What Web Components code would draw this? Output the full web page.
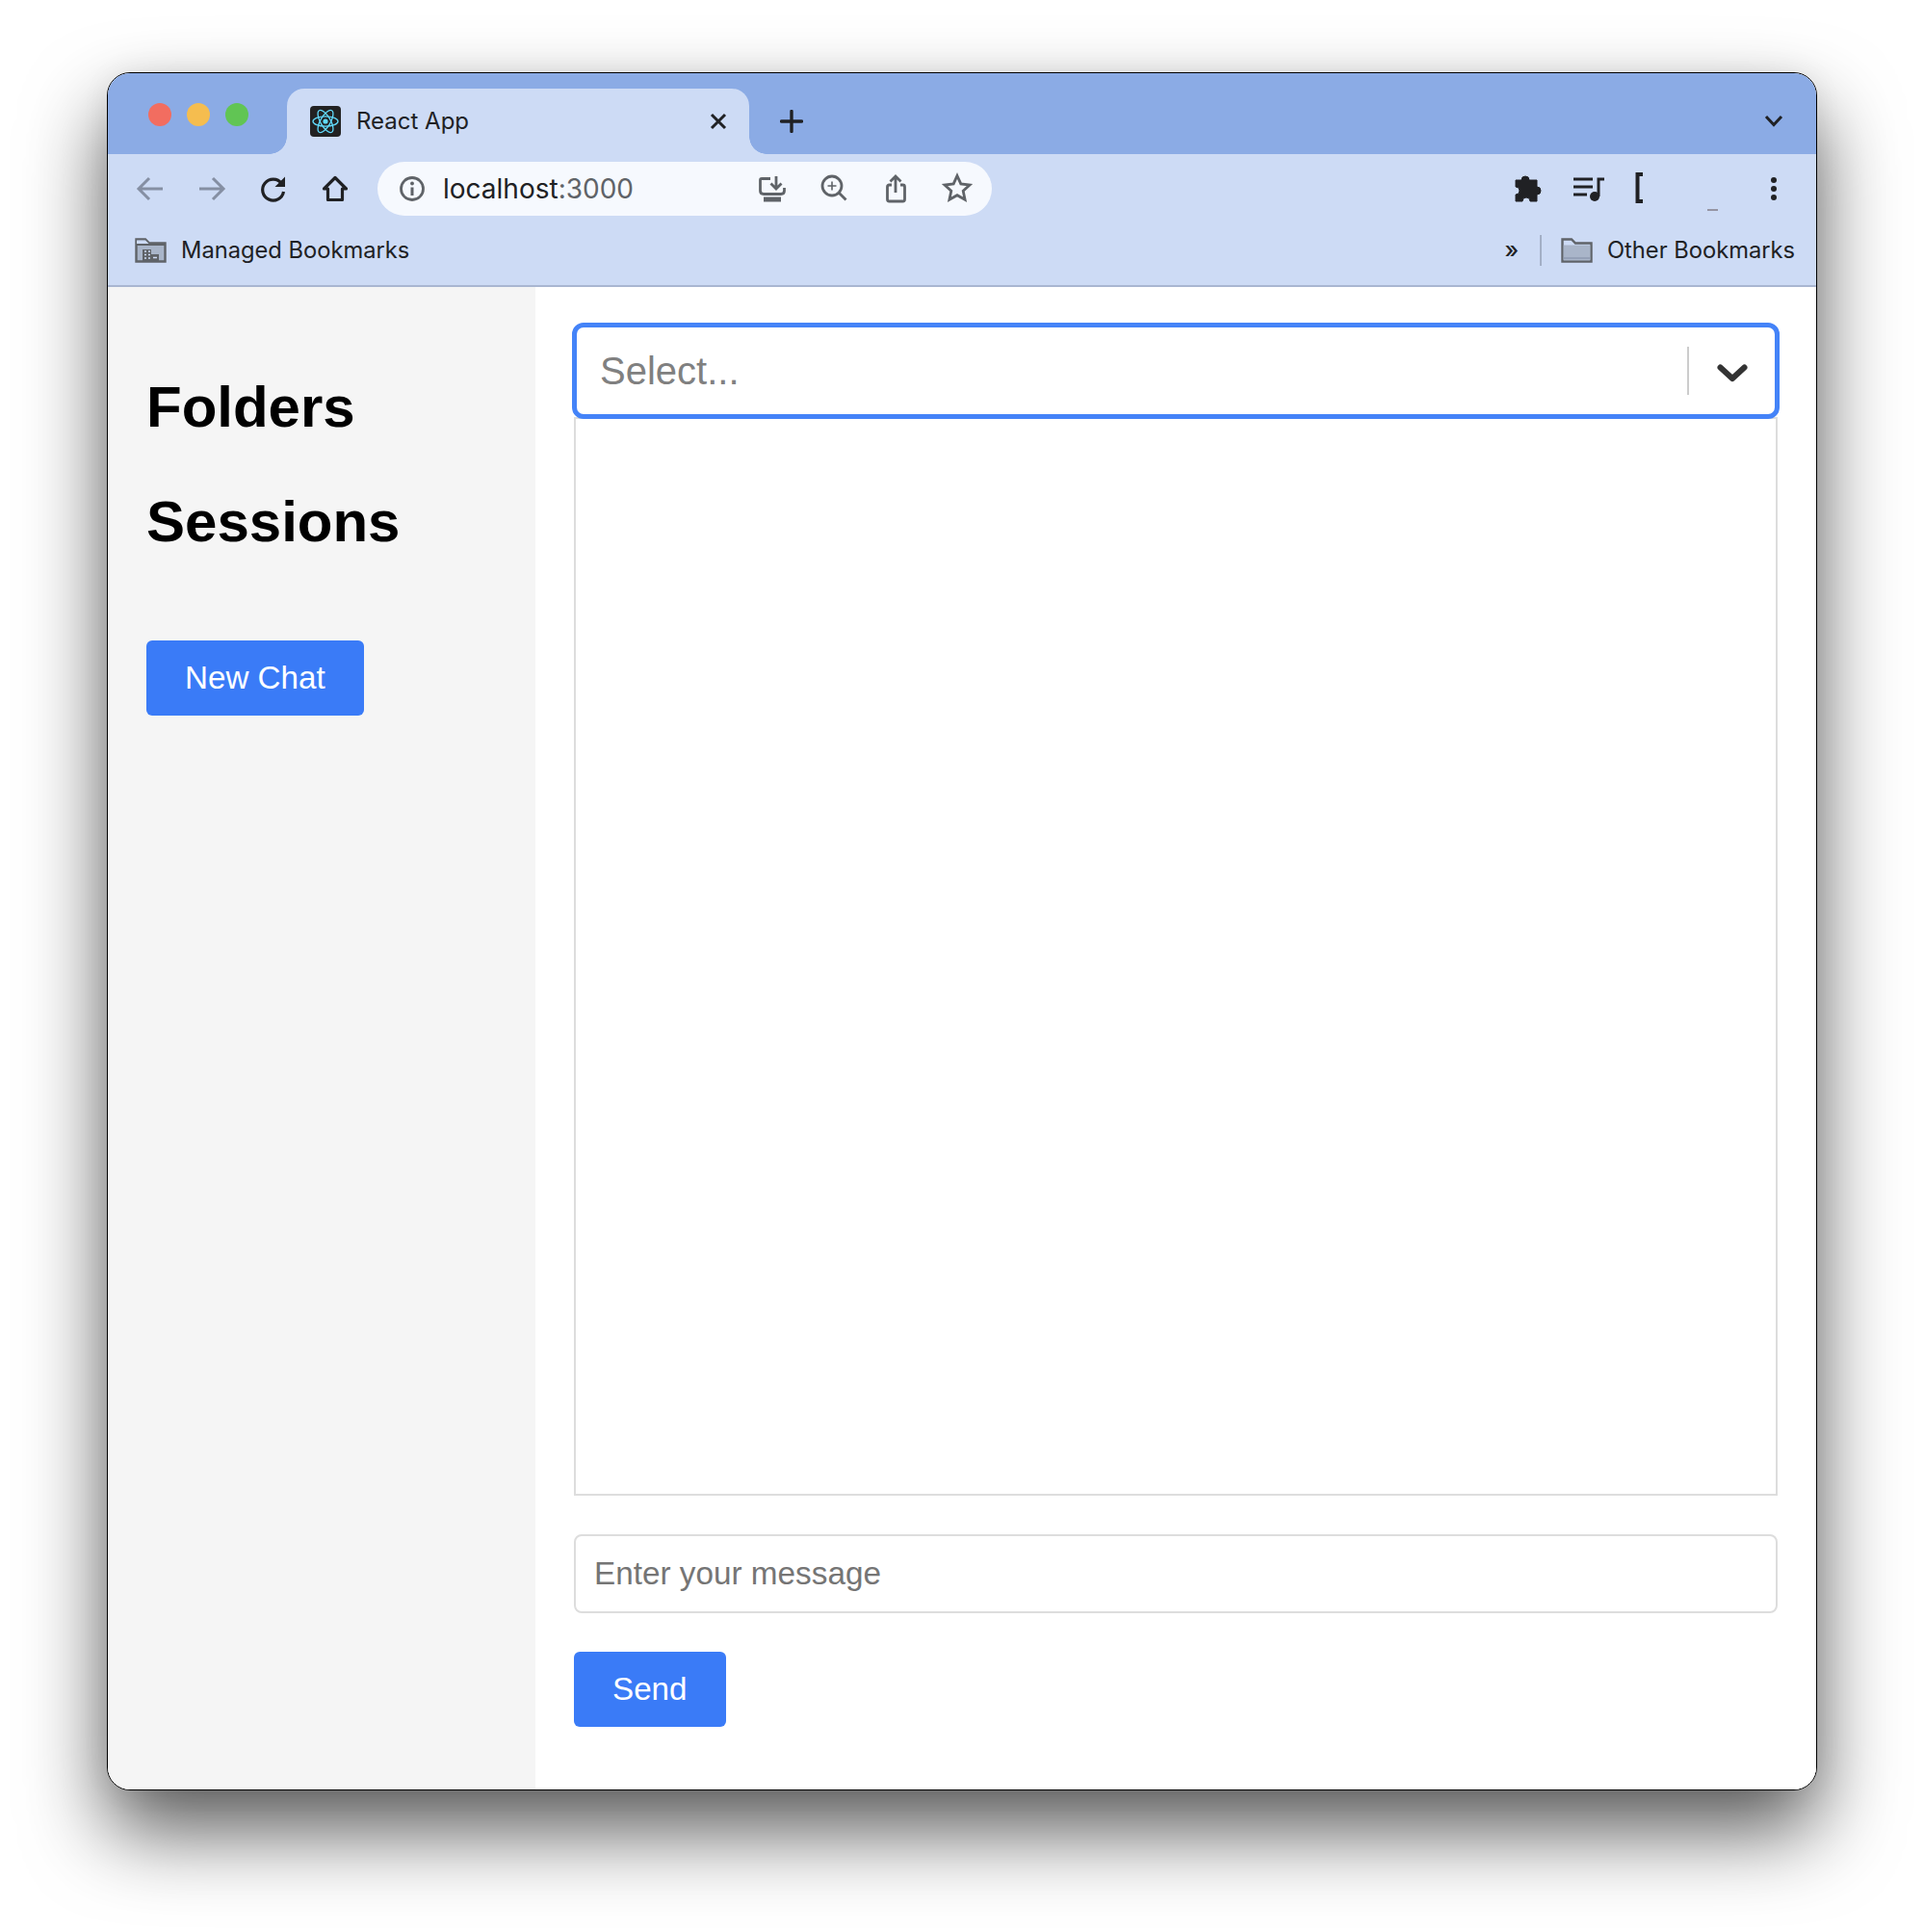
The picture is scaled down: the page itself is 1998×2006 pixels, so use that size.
<!DOCTYPE html>
<html>
<head>
<meta charset="utf-8">
<title>React App</title>
<style>
  html, body { margin: 0; background: #fff; }
  body { padding: 75px 111px 147px; font-family: "Liberation Sans", Arial, sans-serif; }
</style>
</head>
<body>
<browser-window>
  <tab-strip slot="chrome" title-text="React App"></tab-strip>
  <nav-toolbar slot="chrome" host-text="localhost" port-text=":3000"></nav-toolbar>
  <bookmarks-bar slot="chrome"></bookmarks-bar>
  <chat-sidebar slot="sidebar">
    <section-title>Folders</section-title>
    <section-title>Sessions</section-title>
    <action-button class="new-chat">New Chat</action-button>
  </chat-sidebar>
  <chat-main>
    <select-box placeholder="Select..."></select-box>
    <message-log></message-log>
    <message-input placeholder="Enter your message"></message-input>
    <action-button>Send</action-button>
  </chat-main>
</browser-window>

<script>
const CHROME_FONT = `"Inter", "Noto Sans", sans-serif`;

class BrowserWindow extends HTMLElement {
    connectedCallback() {
        const root = this.attachShadow({mode: 'open'});
        root.innerHTML = `
        <style>
            :host {
                display: flex;
                flex-direction: column;
                box-sizing: border-box;
                height: 1784px;
                border: 1px solid #000;
                border-radius: 24px;
                background: #fff;
                box-shadow: 0 42px 84px rgba(0, 0, 0, .65), 0 0 30px rgba(0, 0, 0, .06);
            }
            .clip {
                flex: 1;
                display: flex;
                flex-direction: column;
                border-radius: 23px;
                overflow: hidden;
                min-height: 0;
            }
            .content { flex: 1; display: flex; min-height: 0; }
        </style>
        <div class="clip">
            <slot name="chrome"></slot>
            <div class="content">
                <slot name="sidebar"></slot>
                <slot></slot>
            </div>
        </div>`;
    }
}

class TabStrip extends HTMLElement {
    connectedCallback() {
        const root = this.attachShadow({mode: 'open'});
        root.innerHTML = `
        <style>
            :host {
                display: flex;
                box-sizing: border-box;
                height: 84px;
                padding: 1px 32px 0 42px;
                background: #8babe5;
                font-family: ${CHROME_FONT};
            }
            .lights { display: flex; gap: 16px; margin-top: 30px; }
            .lights i { width: 24px; height: 24px; border-radius: 50%; }
            .tab {
                position: relative;
                display: flex;
                align-items: center;
                box-sizing: border-box;
                width: 480px;
                height: 68px;
                margin: 15px 0 0 40px;
                padding: 0 20px 0 24px;
                background: #cddbf5;
                border-radius: 18px 18px 0 0;
            }
            .tab::before, .tab::after {
                content: "";
                position: absolute;
                bottom: 0;
                width: 18px;
                height: 18px;
            }
            .tab::before { left: -18px; background: radial-gradient(circle at 0 0, #8babe5 17.5px, #cddbf5 18px); }
            .tab::after { right: -18px; background: radial-gradient(circle at 100% 0, #8babe5 17.5px, #cddbf5 18px); }
            .fav { width: 32px; height: 32px; flex: none; }
            .title {
                flex: 1;
                margin: 0 0 1px 16px;
                font-size: 24px;
                color: #202124;
                white-space: nowrap;
            }
            .close { width: 24px; height: 24px; flex: none; }
            .plus { width: 24px; height: 24px; margin: 37px 0 0 32px; flex: none; }
            .more { width: 24px; height: 24px; margin: 37px 0 0 auto; flex: none; }
        </style>
        <div class="lights">
            <i style="background:#f26d60"></i><i style="background:#f5bd4f"></i><i style="background:#61c554"></i>
        </div>
        <div class="tab">
            <svg class="fav" viewBox="0 0 32 32">
                <rect width="32" height="32" rx="4" fill="#222"/>
                <g fill="none" stroke="#61dafb" stroke-width="1.3">
                    <ellipse cx="16" cy="16" rx="13" ry="5.2"/>
                    <ellipse cx="16" cy="16" rx="13" ry="5.2" transform="rotate(60 16 16)"/>
                    <ellipse cx="16" cy="16" rx="13" ry="5.2" transform="rotate(120 16 16)"/>
                </g>
                <circle cx="16" cy="16" r="2.6" fill="#61dafb"/>
            </svg>
            <span class="title">${this.getAttribute('title-text')}</span>
            <svg class="close" viewBox="0 0 24 24"><path d="M5 5 19 19M19 5 5 19" stroke="#202124" stroke-width="3" fill="none"/></svg>
        </div>
        <svg class="plus" viewBox="0 0 24 24"><path d="M12 1.5V22.5M1.5 12H22.5" stroke="#202124" stroke-width="3.4" stroke-linecap="round" fill="none"/></svg>
        <svg class="more" viewBox="0 0 24 24"><path d="M4 7 12 15.5 20 7" stroke="#202124" stroke-width="3" fill="none"/></svg>`;
    }
}

class NavToolbar extends HTMLElement {
    connectedCallback() {
        const root = this.attachShadow({mode: 'open'});
        root.innerHTML = `
        <style>
            :host {
                display: flex;
                box-sizing: border-box;
                height: 72px;
                padding: 8px 24px 0;
                gap: 24px;
                background: #cddbf5;
                font-family: ${CHROME_FONT};
            }
            .cell { width: 40px; height: 56px; display: flex; align-items: center; justify-content: center; flex: none; }
            svg { width: 32px; height: 32px; fill: none; overflow: visible; }
            .omni {
                display: flex;
                align-items: center;
                gap: 24px;
                box-sizing: border-box;
                width: 638px;
                height: 56px;
                padding: 0 16px 0 16px;
                border-radius: 28px;
                background: #f6f9fe;
            }
            .url { flex: 1; font-size: 28px; color: #202124; white-space: nowrap; margin-left: -12px; }
            .url span { color: #5f6368; }
            .low { position: relative; top: 1px; }
            .right { margin-left: auto; display: flex; gap: 24px; }
            .g { stroke: #5f6368; stroke-width: 2.8; }
        </style>
        <div class="cell"><svg viewBox="0 0 32 32"><path d="M29 16H5M15 5 4 16 15 27" stroke="#858fa3" stroke-width="3"/></svg></div>
        <div class="cell"><svg viewBox="0 0 32 32"><path d="M3 16H27M17 5 28 16 17 27" stroke="#858fa3" stroke-width="3"/></svg></div>
        <div class="cell"><svg viewBox="0 0 32 32"><path d="M24.5 10.5A11 11 0 1 0 26.5 19" stroke="#202124" stroke-width="3.2"/><path d="M28 3.5V14H17.5Z" fill="#202124"/></svg></div>
        <div class="cell"><svg viewBox="0 0 32 32"><path d="M16 4.5 4.5 16H8.5V27.5H23.5V16H27.5Z" stroke="#202124" stroke-width="3.2" stroke-linejoin="round"/></svg></div>
        <div class="omni">
            <div class="cell"><svg viewBox="0 0 32 32"><circle cx="16" cy="16" r="11.5" class="g"/><path d="M16 14.5V23" stroke="#5f6368" stroke-width="3"/><circle cx="16" cy="10.5" r="1.9" fill="#5f6368"/></svg></div>
            <div class="url">${this.getAttribute('host-text')}<span>${this.getAttribute('port-text')}</span></div>
            <div class="cell"><svg class="low" viewBox="0 0 32 32"><path d="M14 4.5H5Q3.5 4.5 3.5 6V17Q3.5 20.5 7 20.5H25Q28.5 20.5 28.5 17V14" class="g"/><rect x="7" y="23.5" width="18" height="5" fill="#5f6368"/><path d="M20 2V14M14.5 9.5 20 15 25.5 9.5" class="g"/></svg></div>
            <div class="cell"><svg class="low" viewBox="0 0 32 32"><circle cx="14" cy="12" r="10" class="g"/><path d="M21.5 19.5 28.5 26.5" class="g" stroke-width="3"/><path d="M14 7.5V16.5M9.5 12H18.5" stroke="#5f6368" stroke-width="1.6"/></svg></div>
            <div class="cell"><svg class="low" viewBox="0 0 32 32"><path d="M12 11H9.5Q7.5 11 7.5 13V26Q7.5 28 9.5 28H23.5Q25.5 28 25.5 26V13Q25.5 11 23.5 11H21" class="g"/><path d="M16 2.5V19M10.5 7.5 16 2 21.5 7.5" class="g"/></svg></div>
            <div class="cell"><svg viewBox="0 0 32 32"><path d="M16 2.5 19.8 10.9 29 12 22.2 18.2 24.1 27.3 16 22.7 7.9 27.3 9.8 18.2 3 12 12.2 10.9Z" class="g"/></svg></div>
        </div>
        <div class="right">
            <div class="cell"><svg viewBox="0 0 32 32"><path d="M4 7H10A4 4 0 1 1 18 7H26V14A4 4 0 1 1 26 22V29H19A4 4 0 1 0 11 29H4V22A4 4 0 1 0 4 14Z" fill="#202124" stroke="#202124" stroke-linejoin="round"/></svg></div>
            <div class="cell"><svg viewBox="0 0 32 32"><path d="M0 6H20M0 14H20M0 22H14M26 24V6H32" stroke="#202124" stroke-width="3"/><circle cx="22" cy="24" r="5" fill="#202124"/></svg></div>
            <div class="cell"><svg viewBox="0 0 32 32"><path d="M8 3H2.5V31H8" transform="translate(0 -2)" stroke="#202124" stroke-width="4"/></svg></div>
            <div class="cell"><svg viewBox="0 0 32 32"><path d="M11 38H22" stroke="#5f4f52" stroke-width="1"/></svg></div>
            <div class="cell"><svg viewBox="0 0 32 32"><circle cx="16" cy="7" r="3" fill="#202124"/><circle cx="16" cy="16" r="3" fill="#202124"/><circle cx="16" cy="25" r="3" fill="#202124"/></svg></div>
        </div>`;
    }
}

class BookmarksBar extends HTMLElement {
    connectedCallback() {
        const root = this.attachShadow({mode: 'open'});
        root.innerHTML = `
        <style>
            :host {
                display: flex;
                align-items: center;
                box-sizing: border-box;
                height: 66px;
                padding: 0 22px 8px 28px;
                background: #cddbf5;
                border-bottom: 2px solid #a9b6d1;
                font-family: ${CHROME_FONT};
                font-size: 23.7px;
                color: #202124;
                white-space: nowrap;
            }
            svg { flex: none; }
            span.left, span.other { margin-bottom: 2px; }
            .left { margin-left: 15px; }
            .more { margin: 0 0 2px auto; font-size: 24px; font-weight: 500; }
            .sep { width: 2px; height: 32px; background: #a3afc6; margin: 0 20px 0 22px; }
            .other { margin-left: 15px; }
        </style>
        <svg width="33" height="26" viewBox="0 0 33 26">
            <path d="M1.5 24.5V1.5H11L15 5.5H31.5V24.5Z" fill="#a9b5c9" stroke="#5f6368" stroke-width="2.4"/>
            <path d="M2 2.5H11L14.5 6H2Z" fill="#cddbf5"/><path d="M1.5 7H31.5" stroke="#5f6368" stroke-width="2"/>
            <path d="M8 24V12H17V17H25V24Z" fill="#5f6368"/>
            <path d="M10 14H12M14 14H16M10 17.5H12M14 17.5H16M10 21H12M14 21H16M19 20.5H23" stroke="#cddbf5" stroke-width="1.6"/>
        </svg>
        <span class="left">Managed Bookmarks</span>
        <span class="more">»</span>
        <span class="sep"></span>
        <svg width="33" height="26" viewBox="0 0 33 26">
            <path d="M1.5 24.5V1.5H11L15 5.5H31.5V24.5Z" fill="#cddbf5" stroke="#5f6368" stroke-width="2.4"/>
            <path d="M2.7 7.5H30.3V23.3H2.7Z" fill="#a9b5c9"/>
            <path d="M2.7 21H30.3" stroke="#8e9ab0" stroke-width="1.5"/>
        </svg>
        <span class="other">Other Bookmarks</span>`;
    }
}

class ChatSidebar extends HTMLElement {
    connectedCallback() {
        const root = this.attachShadow({mode: 'open'});
        root.innerHTML = `
        <style>
            :host {
                display: flex;
                flex-direction: column;
                align-items: flex-start;
                box-sizing: border-box;
                width: 444px;
                height: 100%;
                padding: 90px 40px 0;
                background: #f5f5f5;
            }
            ::slotted(section-title) { margin-bottom: 50px; }
            ::slotted(.new-chat) { margin-top: 39px; }
        </style>
        <slot></slot>`;
    }
}

class SectionTitle extends HTMLElement {
    connectedCallback() {
        const root = this.attachShadow({mode: 'open'});
        root.innerHTML = `
        <style>
            :host { display: block; font: bold 60px/69px "Liberation Sans", Arial, sans-serif; color: #000; }
        </style>
        <slot></slot>`;
    }
}

class ActionButton extends HTMLElement {
    connectedCallback() {
        const root = this.attachShadow({mode: 'open'});
        root.innerHTML = `
        <style>
            :host {
                display: inline-flex;
                align-items: center;
                box-sizing: border-box;
                height: 78px;
                padding: 0 40px;
                border-radius: 6px;
                background: #3a7bf7;
                color: #fff;
                font: 33.2px "Liberation Sans", Arial, sans-serif;
                cursor: pointer;
                flex: none;
            }
        </style>
        <slot></slot>`;
    }
}

class ChatMain extends HTMLElement {
    connectedCallback() {
        const root = this.attachShadow({mode: 'open'});
        root.innerHTML = `
        <style>
            :host {
                flex: 1;
                display: flex;
                flex-direction: column;
                align-items: flex-start;
                box-sizing: border-box;
                min-width: 0;
                padding: 37px 40px 65px;
                background: #fff;
            }
        </style>
        <slot></slot>`;
    }
}

class SelectBox extends HTMLElement {
    connectedCallback() {
        const root = this.attachShadow({mode: 'open'});
        root.innerHTML = `
        <style>
            :host {
                display: flex;
                align-items: center;
                align-self: stretch;
                box-sizing: border-box;
                height: 100px;
                margin: 0 -2px -2px;
                position: relative;
                z-index: 1;
                padding-left: 24px;
                background: #fff;
                border: 5px solid #4483f8;
                border-radius: 12px;
                font: 40px "Liberation Sans", Arial, sans-serif;
                color: #808080;
            }
            .ph { flex: 1; }
            .sep { width: 2px; height: 50px; background: #ccc; }
            svg { width: 36px; height: 36px; margin: 4px 26px 0 27px; }
        </style>
        <span class="ph">${this.getAttribute('placeholder')}</span>
        <span class="sep"></span>
        <svg viewBox="0 0 36 36"><path d="M5.5 12.5 18 24 30.5 12.5" fill="none" stroke="#333" stroke-width="6" stroke-linecap="round" stroke-linejoin="round"/></svg>`;
    }
}

class MessageLog extends HTMLElement {
    connectedCallback() {
        const root = this.attachShadow({mode: 'open'});
        root.innerHTML = `
        <style>
            :host {
                display: block;
                flex: 1;
                align-self: stretch;
                box-sizing: border-box;
                border: 2px solid #ddd;
                margin-bottom: 40px;
            }
        </style>
        <slot></slot>`;
    }
}

class MessageInput extends HTMLElement {
    connectedCallback() {
        const root = this.attachShadow({mode: 'open'});
        root.innerHTML = `
        <style>
            :host {
                display: flex;
                align-items: center;
                align-self: stretch;
                box-sizing: border-box;
                height: 82px;
                margin-bottom: 40px;
                padding: 0 19px;
                border: 2px solid #ddd;
                border-radius: 8px;
                font: 33.3px "Liberation Sans", Arial, sans-serif;
                color: #757575;
            }
        </style>
        <span>${this.getAttribute('placeholder')}</span>`;
    }
}

customElements.define('browser-window', BrowserWindow);
customElements.define('tab-strip', TabStrip);
customElements.define('nav-toolbar', NavToolbar);
customElements.define('bookmarks-bar', BookmarksBar);
customElements.define('chat-sidebar', ChatSidebar);
customElements.define('section-title', SectionTitle);
customElements.define('action-button', ActionButton);
customElements.define('chat-main', ChatMain);
customElements.define('select-box', SelectBox);
customElements.define('message-log', MessageLog);
customElements.define('message-input', MessageInput);
</script>
</body>
</html>
